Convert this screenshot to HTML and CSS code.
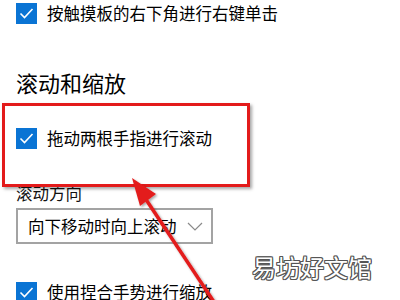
FILE: index.html
```html
<!DOCTYPE html>
<html lang="zh-CN">
<head>
<meta charset="utf-8">
<link rel="stylesheet" href="styles.css">
</head>
<body>
<div class="page">
  <div class="check-row first">
    <span class="box"><svg viewBox="0 0 21 21" width="21" height="21"><polyline points="4.5,10.5 8.5,14.5 16.5,6" fill="none" stroke="#fff" stroke-width="1.6"/></svg></span>
    <span class="label">按触摸板的右下角进行右键单击</span>
  </div>
  <h2 class="heading">滚动和缩放</h2>
  <div class="check-row second">
    <span class="box"><svg viewBox="0 0 21 21" width="21" height="21"><polyline points="4.5,10.5 8.5,14.5 16.5,6" fill="none" stroke="#fff" stroke-width="1.6"/></svg></span>
    <span class="label">拖动两根手指进行滚动</span>
  </div>
  <div class="field-label">滚动方向</div>
  <div class="select">
    <span class="select-text">向下移动时向上滚动</span>
    <svg class="chev" viewBox="0 0 16 9" width="16" height="9"><polyline points="1,1 8,8 15,1" fill="none" stroke="#8a8a8a" stroke-width="1.2"/></svg>
  </div>
  <div class="check-row third">
    <span class="box"><svg viewBox="0 0 21 21" width="21" height="21"><polyline points="4.5,10.5 8.5,14.5 16.5,6" fill="none" stroke="#fff" stroke-width="1.6"/></svg></span>
    <span class="label">使用捏合手势进行缩放</span>
  </div>
</div>
<div class="highlight"></div>
<svg class="arrow" viewBox="0 0 400 300" width="400" height="300">
  <defs>
    <filter id="sh" x="-20%" y="-20%" width="140%" height="140%">
      <feDropShadow dx="1.5" dy="1.5" stdDeviation="1.2" flood-color="#000" flood-opacity="0.35"/>
    </filter>
  </defs>
  <g filter="url(#sh)">
    <line x1="145" y1="198" x2="218" y2="308" stroke="#e31b1b" stroke-width="3.5"/>
    <polygon points="132,178 156,194 140,206" fill="#e31b1b"/>
  </g>
</svg>
<div class="watermark">易坊好文馆</div>
</body>
</html>
```
FILE: styles.css
```css
html, body {
  margin: 0;
  padding: 0;
  background: #fff;
  width: 400px;
  height: 300px;
  overflow: hidden;
}
body {
  font-family: "Noto Sans CJK SC", "Noto Sans", sans-serif;
  color: #000;
  position: relative;
}
.page {
  padding: 3px 0 0 16px;
}
.check-row {
  display: flex;
  align-items: center;
  gap: 10px;
  height: 21px;
}
.box {
  width: 21px;
  height: 21px;
  background: #0a74d4;
  display: block;
  flex: none;
}
.box svg {
  display: block;
}
.label {
  font-size: 16.5px;
  line-height: 21px;
  white-space: nowrap;
}
.heading {
  margin: 43px 0 0;
  font-size: 22px;
  font-weight: normal;
  line-height: 30px;
}
.second {
  margin-top: 31px;
}
.field-label {
  margin-top: 34px;
  font-size: 16.5px;
  line-height: 21px;
  color: #111;
}
.select {
  margin-top: 4px;
  width: 197px;
  height: 36px;
  box-sizing: border-box;
  border: 2px solid #a3a3a3;
  display: flex;
  align-items: center;
  padding: 0 8px 0 10px;
  justify-content: space-between;
}
.select-text {
  font-size: 16.5px;
  line-height: 21px;
  white-space: nowrap;
}
.chev {
  display: block;
}
.third {
  margin-top: 38px;
}
.highlight {
  position: absolute;
  left: 2px;
  top: 103px;
  width: 248px;
  height: 84px;
  box-sizing: border-box;
  border: 3px solid #e31b1b;
  box-shadow: 2px 2px 3px rgba(0,0,0,0.35);
}
.arrow {
  position: absolute;
  left: 0;
  top: 0;
}
.watermark {
  position: absolute;
  left: 252px;
  top: 251px;
  font-size: 24px;
  line-height: 32px;
  color: #fff;
  letter-spacing: 0;
  text-shadow: 1px 0 0 #555, -1px 0 0 #555, 0 1px 0 #555, 0 -1px 0 #555, 1px 1px 0 #555, -1px -1px 0 #555, 1px -1px 0 #555, -1px 1px 0 #555;
}
```
